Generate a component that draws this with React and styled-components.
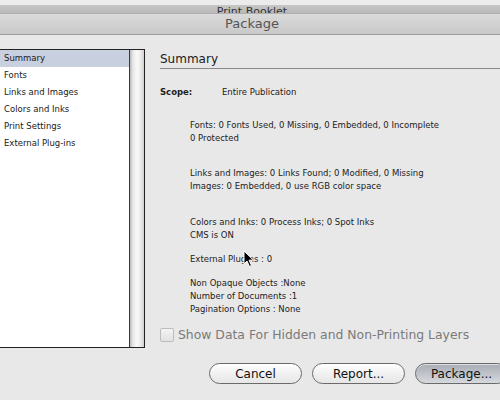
import React from "react";
import styled, { createGlobalStyle } from "styled-components";

const Global = createGlobalStyle`
  body {
    margin: 0;
    background: #e8e8e8;
    font-family: "DejaVu Sans", "Liberation Sans", sans-serif;
  }
`;

const Window = styled.div`
  position: relative;
  width: 500px;
  height: 400px;
  overflow: hidden;
  background: #e8e8e8;
  color: #222;
`;

const TopGap = styled.div`
  height: 5px;
  background: #ececec;
`;

const ParentTitle = styled.div`
  height: 8px;
  overflow: hidden;
  background: linear-gradient(#c6c6c6, #b9b9b9);
  text-align: center;
  font-size: 11px;
  line-height: 14px;
  color: #333;
  padding-left: 4px;
`;

const SheetTitle = styled.div`
  height: 20px;
  background: linear-gradient(#dadada, #c9c9c9);
  border-top: 1px solid #b0b0b0;
  border-bottom: 1px solid #9c9c9c;
  text-align: center;
  font-size: 13px;
  line-height: 20px;
  color: #555;
  padding-left: 4px;
`;

const Content = styled.div`
  display: flex;
  padding-top: 14px;
`;

const Sidebar = styled.div`
  display: flex;
  width: 144px;
  height: 297px;
  margin-left: -1px;
  border: 1px solid #222;
  background: #fff;
  flex-shrink: 0;
`;

const List = styled.ul`
  flex: 1;
  margin: 0;
  padding: 0;
  list-style: none;
`;

const Item = styled.li`
  height: 17px;
  line-height: 17px;
  padding-left: 4px;
  font-size: 8.5px;
  color: #1a1a1a;
  background: ${(p) => (p.selected ? "#c8cfdf" : "transparent")};
`;

const Scrollbar = styled.div`
  width: 14px;
  border-left: 1px solid #3a3a3a;
  background: linear-gradient(90deg, #b8b8b8, #e6e6e6 20%, #fafafa 50%, #e8e8e8 80%, #cfcfcf);
`;

const Main = styled.div`
  flex: 1;
  margin-left: 15px;
`;

const Heading = styled.div`
  margin-top: 3px;
  line-height: 15px;
  padding-bottom: 1px;
  font-size: 12px;
  color: #1a1a1a;
  border-bottom: 1px solid #8a8a8a;
`;

const ScopeRow = styled.div`
  display: flex;
  margin-top: 17px;
  font-size: 8.5px;
  line-height: 13px;
`;

const ScopeLabel = styled.span`
  width: 62px;
  font-weight: bold;
`;

const Group = styled.div`
  margin-top: ${(p) => p.gap}px;
  padding-left: 30px;
  font-size: 8.5px;
  line-height: 13px;
  color: #222;
`;

const CheckRow = styled.label`
  display: flex;
  align-items: center;
  gap: 4px;
  margin-top: 11px;
  font-size: 12.4px;
  color: #7a7a7a;
`;

const Box = styled.span`
  width: 12px;
  height: 12px;
  border: 1px solid #bdbdbd;
  border-radius: 2px;
  background: linear-gradient(#f4f4f4, #e2e2e2);
`;

const Buttons = styled.div`
  display: flex;
  gap: 10px;
  margin-top: 15px;
  padding-left: 209px;
`;

const Button = styled.button`
  flex-shrink: 0;
  width: 93px;
  height: 21px;
  padding: 0;
  border: 1px solid #6a6a6a;
  border-radius: 11px;
  font-family: "DejaVu Sans", sans-serif;
  font-size: 12px;
  color: #111;
  background: ${(p) =>
    p.primary
      ? "linear-gradient(#a9adb4, #bfc3c9 50%, #d6d9dd)"
      : "linear-gradient(#ffffff, #f1f1f1 50%, #e6e6e6)"};
  box-shadow: inset 0 1px 0 rgba(255, 255, 255, 0.6);
`;

const Cursor = styled.svg`
  position: absolute;
  left: 243px;
  top: 250px;
`;

const menu = [
  "Summary",
  "Fonts",
  "Links and Images",
  "Colors and Inks",
  "Print Settings",
  "External Plug-ins",
];

export default function App() {
  return (
    <Window>
      <Global />
      <TopGap />
      <ParentTitle>Print Booklet</ParentTitle>
      <SheetTitle>Package</SheetTitle>
      <Content>
        <Sidebar>
          <List>
            {menu.map((m, i) => (
              <Item key={m} selected={i === 0}>
                {m}
              </Item>
            ))}
          </List>
          <Scrollbar />
        </Sidebar>
        <Main>
          <Heading>Summary</Heading>
          <ScopeRow>
            <ScopeLabel>Scope:</ScopeLabel>
            <span>Entire Publication</span>
          </ScopeRow>
          <Group gap={20}>
            Fonts: 0 Fonts Used, 0 Missing, 0 Embedded, 0 Incomplete
            <br />0 Protected
          </Group>
          <Group gap={22}>
            Links and Images: 0 Links Found; 0 Modified, 0 Missing
            <br />
            Images: 0 Embedded, 0 use RGB color space
          </Group>
          <Group gap={23}>
            Colors and Inks: 0 Process Inks; 0 Spot Inks
            <br />
            CMS is ON
          </Group>
          <Group gap={11}>External Plugins : 0</Group>
          <Group gap={11}>
            Non Opaque Objects :None
            <br />
            Number of Documents :1
            <br />
            Pagination Options : None
          </Group>
          <CheckRow>
            <Box />
            Show Data For Hidden and Non-Printing Layers
          </CheckRow>
        </Main>
      </Content>
      <Buttons>
        <Button>Cancel</Button>
        <Button>Report...</Button>
        <Button primary>Package...</Button>
      </Buttons>
      <Cursor width="12" height="18" viewBox="0 0 12 18">
        <path
          d="M1 1 L1 14 L4 11 L6.5 16.5 L8.5 15.5 L6 10.2 L10.5 10.2 Z"
          fill="#000"
          stroke="#fff"
          strokeWidth="1"
          strokeLinejoin="round"
        />
      </Cursor>
    </Window>
  );
}
